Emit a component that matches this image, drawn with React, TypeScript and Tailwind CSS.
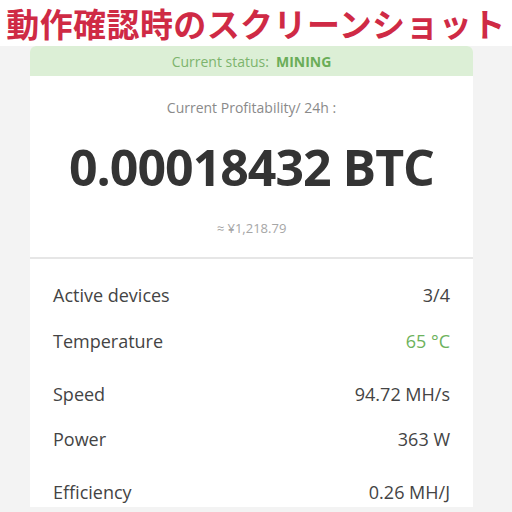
const ROWS = [
  { label: "Active devices", value: "3/4", gap: "mt-0" },
  { label: "Temperature", value: "65 °C", gap: "mt-[16px]", green: true },
  { label: "Speed", value: "94.72 MH/s", gap: "mt-[23px]" },
  { label: "Power", value: "363 W", gap: "mt-[15px]" },
  { label: "Efficiency", value: "0.26 MH/J", gap: "mt-[23px]" },
];

export default function App() {
  return (
    <div className="w-[512px] h-[512px] overflow-hidden bg-[#f3f3f3] font-['Open_Sans',sans-serif]">
      {/* header caption */}
      <div className="h-[46px] bg-white flex items-center justify-center">
        <h1 className="text-[33px] leading-none font-bold tracking-[0.4px] text-[#cf2a45] font-['Noto_Sans_CJK_JP',sans-serif]">
          動作確認時のスクリーンショット
        </h1>
      </div>

      <div className="pl-[30px] pr-[39px]">
        <div className="bg-white rounded-t-md">
          <div className="h-[30px] rounded-t-md bg-[#dcefd6] flex items-center justify-center gap-[7px] text-[14px] text-[#7cb46d]">
            <span>Current status:</span>
            <span className="font-bold text-[#6aad58]">MINING</span>
          </div>

          <div className="flex flex-col items-center border-b-2 border-[#e6e6e6]">
            <p className="mt-[22px] text-[14px] leading-[20px] text-[#8a8a8a]">Current Profitability/ 24h :</p>
            <p className="mt-[21px] text-[50px] leading-[56px] font-bold text-[#343434] tracking-[-1px]">
              0.00018432 BTC
            </p>
            <p className="mt-[24px] mb-[20px] text-[13px] leading-[18px] text-[#a6a6a6]">≈ ¥1,218.79</p>
          </div>

          <div className="px-[23px] pt-[21px]">
            {ROWS.map((r) => (
              <div key={r.label} className={`flex items-center justify-between h-[30px] text-[18px] text-[#444] ${r.gap}`}>
                <span>{r.label}</span>
                <span className={r.green ? "text-[#6db25c]" : ""}>{r.value}</span>
              </div>
            ))}
          </div>
        </div>
      </div>
    </div>
  );
}
